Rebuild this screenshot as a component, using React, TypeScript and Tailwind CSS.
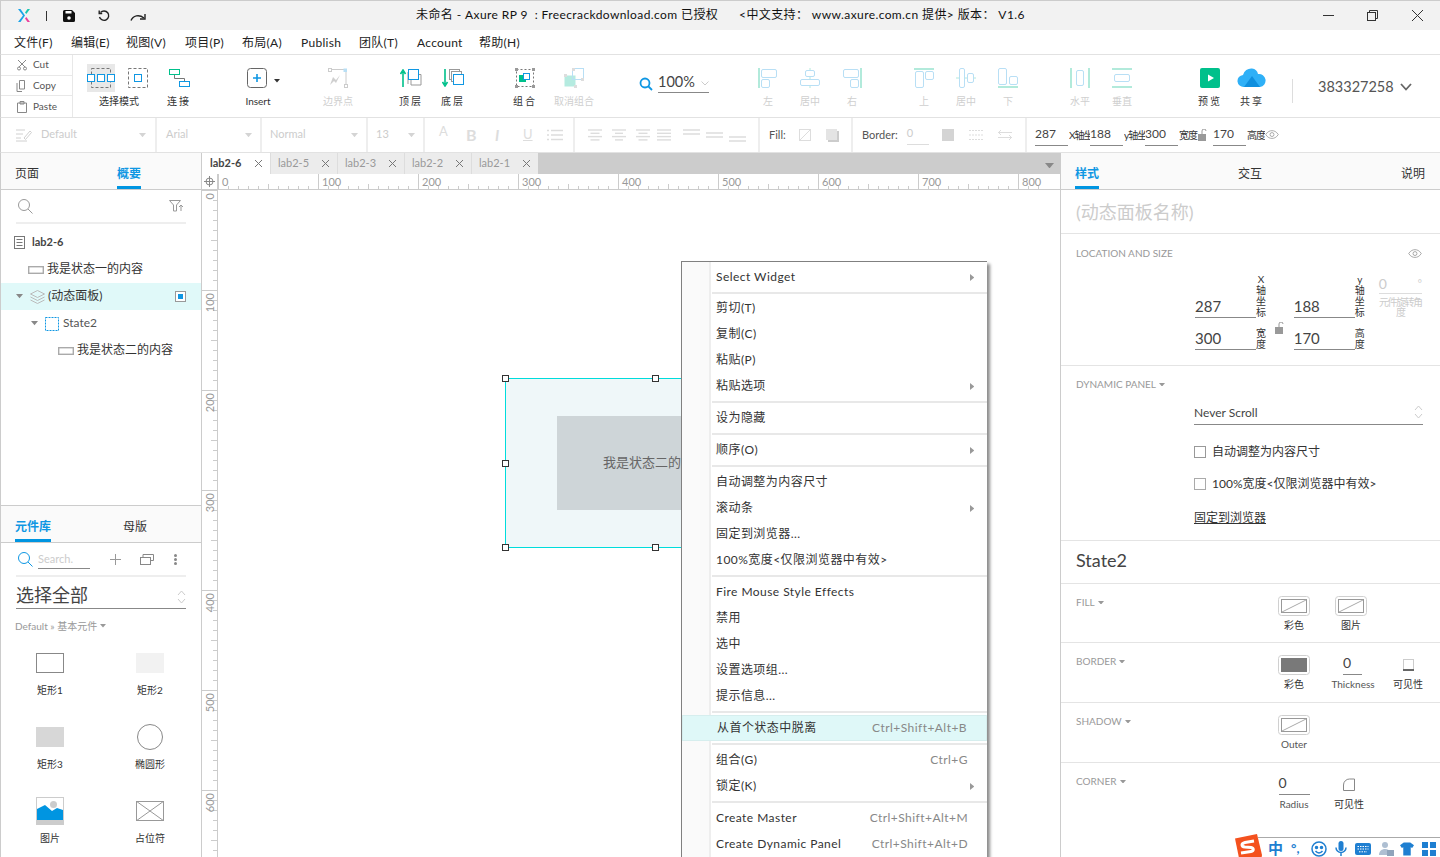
import { ReactNode } from "react";

const BLUE = "#0f97e3";
const TEAL = "#00c08b";

function Tri({ color = "#ccc", w = 7, dir = "down" }: { color?: string; w?: number; dir?: string }) {
  const points = dir === "down" ? `0,0 ${w},0 ${w / 2},${w * 0.6}` : `0,0 ${w * 0.6},${w / 2} 0,${w}`;
  return (
    <svg width={dir === "down" ? w : w * 0.6} height={dir === "down" ? w * 0.6 : w} className="shrink-0">
      <polygon points={points} fill={color} />
    </svg>
  );
}

function Tool({ label, className, muted, wide, children }: { label: string; className: string; muted?: boolean; wide?: boolean; children: ReactNode }) {
  return (
    <div className={`flex shrink-0 flex-col items-center ${className}`}>
      <div className="flex h-[28px] items-center justify-center">{children}</div>
      <div className={`mt-[2px] whitespace-nowrap text-[10px] leading-[14px] ${wide ? "tracking-[2px]" : ""} ${muted ? "text-[#cfcfcf]" : "text-[#333]"}`}>{label}</div>
    </div>
  );
}

function Dropdown({ label, className }: { label: string; className: string }) {
  return (
    <div className={`flex h-full shrink-0 items-center justify-between border-r-2 border-[#eee] ${className}`}>
      <span className="-mt-[2px] text-[11px] text-[#ccc]">{label}</span>
      <Tri color="#d4d4d4" />
    </div>
  );
}

function AlignLines({ widths }: { widths: number[] }) {
  return (
    <svg width="16" height="12" stroke="#ddd" strokeWidth="1.4" className="shrink-0">
      {widths.map((w, i) => (
        <line key={i} x1={(16 - w) / 2} x2={(16 + w) / 2} y1={1 + i * 3.3} y2={1 + i * 3.3} />
      ))}
    </svg>
  );
}

function MiniField({ value, label, labelClass, className = "" }: { value: string; label?: string; labelClass?: string; className?: string }) {
  return (
    <div className={`flex shrink-0 items-center ${className}`}>
      <div className="h-[22px] w-[33px] border-b border-[#888] text-[12px] leading-[20px] text-[#444]">{value}</div>
      {label && <div className={`overflow-hidden whitespace-nowrap text-[10px] tracking-[-1px] text-[#333] ${labelClass}`}>{label}</div>}
    </div>
  );
}

function Eye({ size = 14 }: { size?: number }) {
  return (
    <svg width={size} height={size * 0.65} viewBox="0 0 20 13" fill="none" stroke="#999" strokeWidth="1.2" className="shrink-0">
      <path d="M1 6.5C4 2 7 1 10 1s6 1 9 5.500C16 11 13 12 10 12S4 11 1 6.500Z" />
      <circle cx="10" cy="6.500" r="2.800" />
    </svg>
  );
}

function Swatch({ fill }: { fill?: string }) {
  return (
    <svg width="32" height="20" className="shrink-0">
      <rect x="0.5" y="0.5" width="31" height="19" rx="3" fill="#fff" stroke="#d0d0d0" />
      <rect x="3.500" y="3.500" width="25" height="13" fill={fill ?? "#fff"} stroke={fill ?? "#999"} />
      {!fill && <line x1="4" y1="16" x2="28" y2="4" stroke="#aaa" />}
    </svg>
  );
}

function VField({ value, label }: { value: string; label: string }) {
  return (
    <div className="flex items-end">
      <div className="h-[24px] w-[61px] border-b border-[#888] text-[15px] leading-[24px] text-[#444]">{value}</div>
      <div className="w-[10px] text-center text-[10px] leading-[11px] text-[#333] [word-break:break-all]">{label}</div>
    </div>
  );
}

function SectionTitle({ label }: { label: string }) {
  return (
    <div className="flex h-[13px] items-center gap-[3px] text-[10px] leading-[13px] text-[#999]">
      {label}
      <Tri color="#999" w={6} />
    </div>
  );
}

function Sep({ className }: { className: string }) {
  return (
    <div className={`flex items-center pl-[30px] ${className}`}>
      <div className="h-[2px] w-full bg-[#e8e8e8]" />
    </div>
  );
}

function MenuItem({ label, shortcut, arrow, active }: { label: string; shortcut?: string; arrow?: boolean; active?: boolean }) {
  return (
    <div className={`flex h-[26px] items-center pl-[34px] text-[12px] tracking-[0.45px] text-[#333] ${active ? "border border-[#d6eeee] bg-[#dff8f8] pl-[33px]" : ""}`}>
      <span className="flex-1 whitespace-nowrap">{label}</span>
      {shortcut && <span className="mr-[19px] whitespace-nowrap text-[#888]">{shortcut}</span>}
      {arrow && (
        <span className="mr-[13px]">
          <Tri dir="right" color="#999" w={7} />
        </span>
      )}
    </div>
  );
}

function WidgetCell({ label, children }: { label: string; children: ReactNode }) {
  return (
    <div className="flex h-[74px] flex-col items-center">
      <div className="flex h-[28px] items-center justify-center">{children}</div>
      <div className="mt-[6px] text-[10px] leading-[14px] text-[#333]">{label}</div>
    </div>
  );
}

function Handle({ className }: { className: string }) {
  return <div className={`absolute h-[7px] w-[7px] border border-[#333] bg-white ${className}`} />;
}

const tabs = ["lab2-5", "lab2-3", "lab2-2", "lab2-1"];
const menus = [
  ["文件(F)", "w-[57px]"],
  ["编辑(E)", "w-[55px]"],
  ["视图(V)", "w-[59px]"],
  ["项目(P)", "w-[57px]"],
  ["布局(A)", "w-[59px]"],
  ["Publish", "w-[58px]"],
  ["团队(T)", "w-[58px]"],
  ["Account", "w-[62px]"],
  ["帮助(H)", "w-[60px]"],
];

function HRuler() {
  const ticks = Array.from({ length: 84 }, (_, i) => i * 10);
  return (
    <svg width="827" height="16" className="shrink-0">
      {ticks.map((t) => (
        <line key={t} x1={t + 0.5} x2={t + 0.5} y1={t % 100 === 0 ? 0 : t % 50 === 0 ? 10 : 12} y2="16" stroke="#ccc" />
      ))}
      {[0, 100, 200, 300, 400, 500, 600, 700, 800].map((t) => (
        <text key={t} x={t + 4} y="12" fontSize="11" fill="#999">{t}</text>
      ))}
    </svg>
  );
}

function VRuler() {
  const ticks = Array.from({ length: 68 }, (_, i) => i * 10);
  return (
    <svg width="16" height="667" className="shrink-0 border-r border-[#ccc]">
      {ticks.map((t) => (
        <line key={t} x1={t % 100 === 0 ? 0 : t % 50 === 0 ? 9 : 11} x2="16" y1={t + 0.5} y2={t + 0.5} stroke="#ccc" />
      ))}
      {[0, 100, 200, 300, 400, 500, 600].map((t) => (
        <text key={t} fontSize="11" fill="#999" textAnchor="end" transform={`translate(12 ${t + 3}) rotate(-90)`}>{t}</text>
      ))}
    </svg>
  );
}

export default function App() {
  return (
    <div className="relative flex h-[857px] w-[1440px] flex-col overflow-hidden bg-white font-['Lato','Noto_Sans_CJK_SC',sans-serif] text-[#333]">
      {/* title bar */}
      <div className="flex h-[30px] shrink-0 items-center border-t border-l border-[#ccc] bg-[#f2f2f2]">
        <svg width="14" height="15" viewBox="0 0 14 15" className="ml-[16px] shrink-0">
          <path d="M1 1l5 6.500L1 14h2.500L8 7.500 3.500 1Z" fill="#1aa3e8" />
          <path d="M13 1H10.500L8 4.500 9.300 6Z" fill="#16c6b0" />
          <path d="M13 14h-2.500L8 10.500 9.300 9Z" fill="#ec3e9c" />
        </svg>
        <div className="ml-[15px] h-[10px] w-px bg-[#333]" />
        <svg width="12" height="12" viewBox="0 0 12 12" className="ml-[16px] shrink-0">
          <path d="M0 1.500A1.500 1.500 0 0 1 1.500 0H9l3 3v7.500a1.500 1.500 0 0 1-1.500 1.500h-9A1.500 1.500 0 0 1 0 10.500Z" fill="#111" />
          <rect x="2.500" y="1" width="6" height="2.500" fill="#fff" />
          <circle cx="6" cy="8" r="1.800" fill="#fff" />
        </svg>
        <svg width="12" height="12" viewBox="0 0 12 12" fill="none" stroke="#222" strokeWidth="1.400" className="ml-[23px] shrink-0">
          <path d="M2.500 2.500A4.700 4.700 0 1 1 1.500 7" />
          <path d="M1.200 0.500v3h3" />
        </svg>
        <svg width="16" height="10" viewBox="0 0 16 10" fill="none" stroke="#222" strokeWidth="1.400" className="ml-[20px] mt-[3px] shrink-0">
          <path d="M1 8.500C3 3.500 9 2 14 6" />
          <path d="M15 2v5h-5" />
        </svg>
        <div className="-mt-[2px] ml-[270px] whitespace-nowrap text-[12px] tracking-[0.4px] text-[#111]">
          未命名 - Axure RP 9 &nbsp;: Freecrackdownload.com 已授权 &nbsp; &nbsp; &nbsp;&lt;中文支持： www.axure.com.cn 提供&gt; 版本： V1.6
        </div>
        <div className="ml-auto flex items-center">
          <div className="mr-[33px] h-px w-[11px] bg-[#333]" />
          <svg width="11" height="11" fill="none" stroke="#333" className="mr-[34px] shrink-0">
            <rect x="0.500" y="2.500" width="8" height="8" />
            <path d="M2.500 2.500v-2h8v8h-2" />
          </svg>
          <svg width="11" height="11" stroke="#333" className="mr-[17px] shrink-0">
            <path d="M0 0l11 11M11 0 0 11" />
          </svg>
        </div>
      </div>

      {/* menu bar */}
      <div className="flex h-[25px] shrink-0 items-center border-b border-l border-[#ccc] border-b-[#e2e2e2] pl-[13px] pt-[1px] text-[12px] tracking-[0.3px] text-[#222]">
        {menus.map(([m, w]) => (
          <div key={m} className={`whitespace-nowrap ${w}`}>{m}</div>
        ))}
      </div>

      {/* toolbar */}
      <div className="flex h-[63px] shrink-0 border-b border-l border-[#e2e2e2] border-l-[#ccc]">
        <div className="flex w-[72px] shrink-0 flex-col border-r border-[#e8e8e8] text-[10px] text-[#555]">
          {[
            ["Cut", "M3 8 10 1M9 8 2 1M4.500 9.500a1.500 1.500 0 1 1-3 0 1.500 1.500 0 0 1 3 0ZM10.500 9.500a1.500 1.500 0 1 1-3 0 1.500 1.500 0 0 1 3 0Z"],
            ["Copy", "M3.500 .5h5v8.500h-5ZM1 3v8.500h5"],
            ["Paste", "M1.500 2h9v9.500h-9ZM4 .5h4V3H4Z"],
          ].map(([t, d], i) => (
            <div key={t} className={`flex h-[21px] items-center pl-[15px] ${i < 2 ? "border-b border-[#e8e8e8]" : ""}`}>
              <svg width="12" height="12" fill="none" stroke="#888" className="shrink-0">
                <path d={d} />
              </svg>
              <span className="ml-[5px]">{t}</span>
            </div>
          ))}
        </div>
        <div className="flex pt-[9px]">
          <Tool label="选择模式" className="ml-[16px] w-[60px]">
            <div className="mr-[20px] flex items-center">
              <svg width="28" height="28" className="shrink-0 bg-[#e8e8e8]">
                <rect x="4.500" y="4.500" width="19" height="19" fill="none" stroke="#777" strokeDasharray="3 2" />
                <g fill="#fff" stroke={BLUE}>
                  <rect x="0.500" y="10.500" width="7" height="7" />
                  <rect x="10.500" y="10.500" width="7" height="7" />
                  <rect x="20.500" y="10.500" width="7" height="7" />
                </g>
              </svg>
              <svg width="20" height="20" className="ml-[13px] -mr-[16px] shrink-0">
                <rect x="0.500" y="0.500" width="19" height="19" fill="none" stroke="#777" strokeDasharray="3 2" />
                <rect x="6.500" y="6.500" width="7" height="7" fill="#fff" stroke={BLUE} />
              </svg>
            </div>
          </Tool>
          <Tool label="连接" wide className="ml-[10px] w-[40px]">
            <svg width="21" height="19" fill="none" className="shrink-0">
              <rect x="0.500" y="0.500" width="10" height="5" stroke={TEAL} />
              <rect x="10.500" y="12.500" width="10" height="5" stroke={BLUE} />
              <path d="M5.500 6v3.500h10V12" stroke="#777" />
            </svg>
          </Tool>
          <Tool label="Insert" className="ml-[39px] w-[40px]">
            <div className="flex items-center">
              <svg width="20" height="20" fill="none" className="ml-[10px] shrink-0">
                <rect x="0.500" y="0.500" width="19" height="19" rx="3" stroke="#666" />
                <path d="M10 6v8M6 10h8" stroke={BLUE} strokeWidth="1.600" />
              </svg>
              <span className="ml-[7px] mt-[6px]"><Tri color="#333" w={6} /></span>
            </div>
          </Tool>
          <Tool label="边界点" muted className="ml-[40px] w-[40px]">
            <svg width="20" height="20" fill="none" className="shrink-0">
              <path d="M3 1.500h14M18 4v12" stroke="#ccc" />
              <rect x="0.500" y="0.500" width="3" height="3" stroke="#ccc" />
              <rect x="15.500" y="0.500" width="3.500" height="3.500" fill="#b8dff5" />
              <rect x="16.500" y="16.500" width="3" height="3" stroke="#ccc" />
              <path d="M2 17l3-8 3 3 4-5-4 8-2-2Z" fill="#cfcfcf" />
            </svg>
          </Tool>
          <Tool label="顶层" wide className="ml-[32px] w-[42px]">
            <svg width="22" height="18" fill="none" className="shrink-0">
              <path d="M3 18V3M0.500 5 3 1l2.500 4" stroke={TEAL} strokeWidth="1.600" />
              <path d="M11 5.500h10V16H11ZM8 3v12" stroke="#999" />
              <rect x="8.500" y="0.500" width="10" height="10" fill="#fff" stroke={BLUE} />
            </svg>
          </Tool>
          <Tool label="底层" wide className="w-[42px]">
            <svg width="22" height="18" fill="none" className="shrink-0">
              <path d="M3 0v15M0.500 13 3 17l2.500-4" stroke={TEAL} strokeWidth="1.600" />
              <rect x="7.500" y="0.500" width="10" height="10" stroke="#999" />
              <rect x="9.500" y="2.500" width="10" height="10" fill="#fff" stroke="#999" />
              <rect x="11.500" y="5.500" width="10" height="10" fill="#fff" stroke={BLUE} />
            </svg>
          </Tool>
          <Tool label="组合" wide className="ml-[30px] w-[42px]">
            <svg width="20" height="20" fill="none" className="shrink-0">
              <rect x="1.500" y="1.500" width="17" height="17" stroke="#777" strokeDasharray="2 2" />
              <rect x="4" y="7" width="7" height="7" fill={TEAL} />
              <rect x="8.500" y="5.500" width="6" height="6" fill="#fff" stroke={BLUE} />
              <g fill="#999">
                <rect width="3" height="3" /><rect x="17" width="3" height="3" /><rect y="17" width="3" height="3" /><rect x="17" y="17" width="3" height="3" />
              </g>
            </svg>
          </Tool>
          <Tool label="取消组合" muted className="ml-[2px] w-[52px]">
            <svg width="20" height="20" fill="none" className="shrink-0">
              <rect x="0.500" y="7.500" width="11" height="11" fill="#b5ebe0" />
              <rect x="8.500" y="0.500" width="11" height="11" stroke="#b8dff5" />
              <g fill="#ddd">
                <rect x="0" y="6" width="3" height="3" /><rect x="10" y="17" width="3" height="3" /><rect x="17" y="10" width="3" height="3" /><rect x="8" y="0" width="3" height="3" />
              </g>
            </svg>
          </Tool>
          <div className="ml-[38px] mt-[4px] flex h-[28px] w-[72px] shrink-0 items-center">
            <svg width="14" height="14" fill="none" stroke={BLUE} strokeWidth="1.800" className="ml-[1px] mt-[3px] shrink-0">
              <circle cx="6" cy="6" r="4.500" /><path d="M9 9l4 4" />
            </svg>
            <div className="ml-[5px] flex h-[22px] w-[51px] items-center justify-between border-b border-[#888] text-[14.5px] text-[#444]">
              100%
              <svg width="8" height="5" fill="none" stroke="#ccc" className="mt-[4px] shrink-0"><path d="M0.500 0.500l3.500 3.500 3.500-3.500" /></svg>
            </div>
          </div>
          <Tool label="左" muted className="ml-[37px] w-[42px]">
            <svg width="20" height="20" fill="none" className="shrink-0"><path d="M1 0v20" stroke="#b2eadb" strokeWidth="2" /><g stroke="#b8dff5"><rect x="3.500" y="1.500" width="15" height="8" rx="1.500" /><rect x="3.500" y="11.500" width="8" height="8" rx="1.500" /></g></svg>
          </Tool>
          <Tool label="居中" muted className="w-[42px]">
            <svg width="20" height="20" fill="none" className="shrink-0"><path d="M10 0v20" stroke="#b2eadb" /><g stroke="#b8dff5" fill="#fff"><rect x="5.500" y="2.500" width="9" height="6" rx="1.500" /><rect x="0.500" y="11.500" width="19" height="6" rx="1.500" /></g></svg>
          </Tool>
          <Tool label="右" muted className="w-[42px]">
            <svg width="20" height="20" fill="none" className="shrink-0"><path d="M19 0v20" stroke="#b2eadb" strokeWidth="2" /><g stroke="#b8dff5"><rect x="1.500" y="1.500" width="15" height="8" rx="1.500" /><rect x="8.500" y="11.500" width="8" height="8" rx="1.500" /></g></svg>
          </Tool>
          <Tool label="上" muted className="ml-[30px] w-[42px]">
            <svg width="20" height="20" fill="none" className="shrink-0"><path d="M0 1h20" stroke="#b2eadb" strokeWidth="2" /><g stroke="#b8dff5"><rect x="1.500" y="3.500" width="8" height="16" rx="1.500" /><rect x="11.500" y="3.500" width="8" height="8" rx="1.500" /></g></svg>
          </Tool>
          <Tool label="居中" muted className="w-[42px]">
            <svg width="20" height="20" fill="none" className="shrink-0"><path d="M0 10h20" stroke="#b2eadb" /><g stroke="#b8dff5" fill="#fff"><rect x="3.500" y="0.500" width="5" height="19" rx="1.500" /><rect x="11.500" y="5.500" width="6" height="9" rx="1.500" /></g></svg>
          </Tool>
          <Tool label="下" muted className="w-[42px]">
            <svg width="20" height="20" fill="none" className="shrink-0"><path d="M0 19h20" stroke="#b2eadb" strokeWidth="2" /><g stroke="#b8dff5"><rect x="0.500" y="0.500" width="8" height="16" rx="1.500" /><rect x="11.500" y="8.500" width="8" height="8" rx="1.500" /></g></svg>
          </Tool>
          <Tool label="水平" muted className="ml-[30px] w-[42px]">
            <svg width="20" height="20" fill="none" className="shrink-0"><path d="M1 0v20M19 0v20" stroke="#b2eadb" strokeWidth="2" /><rect x="6.500" y="2.500" width="7" height="15" rx="1.500" stroke="#b8dff5" /></svg>
          </Tool>
          <Tool label="垂直" muted className="w-[42px]">
            <svg width="20" height="20" fill="none" className="shrink-0"><path d="M0 1h20M0 19h20" stroke="#b2eadb" strokeWidth="2" /><rect x="2.500" y="6.500" width="15" height="7" rx="1.500" stroke="#b8dff5" /></svg>
          </Tool>
          <Tool label="预览" wide className="ml-[46px] w-[42px]">
            <svg width="20" height="20" className="shrink-0"><rect width="20" height="20" rx="2" fill="#00c08b" /><path d="M8 6.500l6 3.500-6 3.500Z" fill="#fff" /></svg>
          </Tool>
          <Tool label="共享" wide className="w-[42px]">
            <svg width="30" height="20" viewBox="0 0 30 20" className="shrink-0">
              <path d="M7 19a6 6 0 0 1-1-12 8.500 8.500 0 0 1 9-6.500A7 7 0 0 1 21 6a6.500 6.500 0 0 1 2 13Z" fill="#2fb0f7" />
              <path d="M7 19 15 8l8 11Z" fill="#0f8fde" />
            </svg>
          </Tool>
          <div className="ml-[19px] mt-[15px] h-[24px] w-px bg-[#ddd]" />
          <div className="ml-[25px] flex h-[45px] items-center gap-[6px] text-[14.5px] text-[#555]">
            383327258
            <svg width="12" height="8" fill="none" stroke="#666" strokeWidth="1.800" className="shrink-0"><path d="M1 1l5 5.500L11 1" /></svg>
          </div>
        </div>
      </div>

      {/* format bar */}
      <div className="flex h-[35px] shrink-0 items-center border-b border-l border-[#e2e2e2] border-l-[#ccc]">
        <div className="flex h-full w-[156px] shrink-0 items-center justify-between border-r-2 border-[#eee] pl-[15px] pr-[9px]">
          <svg width="16" height="14" fill="none" stroke="#d0d0d0" className="shrink-0"><path d="M0 2h9M0 6h7M0 10h5M0 13h11M8 10l6-7 1.500 1.500-6 7Z" /></svg>
          <span className="-mt-[2px] ml-[9px] flex-1 text-[11px] text-[#ccc]">Default</span>
          <Tri color="#d4d4d4" />
        </div>
        <Dropdown label="Arial" className="w-[105px] pl-[9px] pr-[8px]" />
        <Dropdown label="Normal" className="w-[106px] pl-[8px] pr-[8px]" />
        <Dropdown label="13" className="w-[57px] pl-[8px] pr-[8px]" />
        <div className="flex h-full w-[150px] shrink-0 items-center border-r-2 border-[#eee] text-[#ddd]">
          <span className="ml-[14px] mb-[6px] w-[20px] text-[13px]">A</span>
          <span className="ml-[7px] w-[29px] text-[16px] font-bold">B</span>
          <span className="w-[28px] text-[15px] font-bold italic">I</span>
          <span className="w-[24px] text-[13px] underline">U</span>
          <svg width="16" height="12" stroke="#ddd" strokeWidth="1.500" className="shrink-0"><path d="M4 1.500h12M4 6h12M4 10.500h12M0 1.500h2M0 6h2M0 10.500h2" /></svg>
        </div>
        <div className="flex h-full w-[185px] shrink-0 items-center border-r-2 border-[#eee] pl-[12px]">
          <div className="flex gap-[8px]">
            <AlignLines widths={[14, 9, 14, 9]} />
            <AlignLines widths={[14, 8, 14, 8]} />
            <AlignLines widths={[14, 9, 14, 9]} />
          </div>
          <div className="ml-[5px]"><AlignLines widths={[14, 14, 14, 14]} /></div>
          <div className="ml-[11px] flex items-center gap-[6px]">
            <svg width="17" height="6" stroke="#ddd" strokeWidth="1.500" className="mb-[7px] shrink-0"><path d="M0 1h17M0 5h17" /></svg>
            <svg width="17" height="6" stroke="#ddd" strokeWidth="1.500" className="shrink-0"><path d="M0 1h17M0 5h17" /></svg>
            <svg width="17" height="6" stroke="#ddd" strokeWidth="1.500" className="mt-[7px] shrink-0"><path d="M0 1h17M0 5h17" /></svg>
          </div>
        </div>
        <div className="flex h-full w-[93px] shrink-0 items-center border-r-2 border-[#eee] pl-[9px] text-[11px] text-[#555]">
          Fill:
          <svg width="12" height="12" fill="none" stroke="#ddd" className="ml-[13px] shrink-0"><rect x="0.500" y="0.500" width="11" height="11" /><path d="M1 11 11 1" /></svg>
          <svg width="13" height="13" className="ml-[15px] shrink-0"><rect x="2" y="2" width="11" height="11" fill="#ccc" /><rect width="11" height="11" fill="#e4e4e4" /></svg>
        </div>
        <div className="flex h-full w-[174px] shrink-0 items-center border-r-2 border-[#eee] pl-[9px] text-[11px] text-[#555]">
          Border:
          <div className="ml-[9px] h-[20px] w-[22px] border-b border-[#ddd] text-[11px] leading-[16px] text-[#ccc]">0</div>
          <div className="ml-[13px] h-[12px] w-[12px] shrink-0 bg-[#d4d4d4]" />
          <svg width="15" height="12" stroke="#ddd" className="ml-[15px] shrink-0" strokeDasharray="2 1"><path d="M0 1.500h15M0 6h15M0 10.500h15" /></svg>
          <svg width="14" height="12" fill="none" stroke="#ddd" className="ml-[14px] shrink-0"><path d="M0 3.500h14M0 8.500h14M3 1 .5 3.500 3 6M11 6l2.500 2.500L11 11" /></svg>
        </div>
        <div className="flex h-full items-center pl-[8px]">
          <MiniField value="287" label="X轴坐标" labelClass="ml-[1px] w-[21px]" />
          <MiniField value="188" label="y轴坐标" labelClass="ml-[1px] w-[21px]" />
          <MiniField value="300" label="宽度" labelClass="ml-[1px] w-[20px]" />
          <svg width="10" height="12" className="-ml-[1px] shrink-0"><rect y="5" width="8" height="7" fill="#999" /><path d="M4 5V2a2 2 0 0 1 4 0" fill="none" stroke="#999" /></svg>
          <div className="ml-[5px]"><MiniField value="170" label="高度" labelClass="ml-[1px] w-[18px]" /></div>
          <Eye />
        </div>
      </div>

      {/* main */}
      <div className="flex min-h-0 flex-1">
        {/* left panel */}
        <div className="flex w-[202px] shrink-0 flex-col border-x border-[#ccc]">
          <div className="flex h-[37px] shrink-0 border-b border-[#ccc] bg-[#fafafa] pl-[14px] text-[12px]">
            <div className="w-[102px] pt-[12px]">页面</div>
            <div className="flex h-[36px] w-[24px] flex-col">
              <div className="flex-1 whitespace-nowrap pt-[12px] font-bold text-[#0f97e3]">概要</div>
              <div className="h-[3px] bg-[#0095e1]" />
            </div>
          </div>
          <div className="mx-[15px] flex h-[34px] shrink-0 items-center justify-between border-b-2 border-[#eee] pl-[2px] pr-[2px]">
            <svg width="15" height="15" fill="none" stroke="#999" className="shrink-0"><circle cx="6" cy="6" r="5.500" /><path d="M10 10l4.500 4.500" /></svg>
            <svg width="15" height="12" fill="none" stroke="#999" className="shrink-0"><path d="M0.500 0.500h11L7.500 5v6h-3V5ZM12 11V5M10 7l2-2 2 2" /></svg>
          </div>
          <div className="mt-[5px] flex flex-col text-[12px] text-[#333]">
            <div className="flex h-[27px] items-center pl-[13px]">
              <svg width="11" height="13" fill="none" stroke="#777" className="shrink-0"><rect x="0.500" y="0.500" width="10" height="12" /><path d="M2.500 3.500h6M2.500 6.500h6M2.500 9.500h6" /></svg>
              <span className="ml-[7px] text-[11px] font-bold text-[#444]">lab2-6</span>
            </div>
            <div className="flex h-[27px] items-center pl-[27px]">
              <svg width="16" height="8" fill="none" stroke="#aaa" strokeWidth="1.400" className="shrink-0"><rect x="0.700" y="0.700" width="14.600" height="6.600" /></svg>
              <span className="-mt-[2px] ml-[3px]">我是状态一的内容</span>
            </div>
            <div className="flex h-[27px] items-center bg-[#e0f9f9] pl-[15px] pr-[15px]">
              <Tri color="#888" w={7} />
              <svg width="15" height="14" fill="none" stroke="#bbb" className="ml-[7px] shrink-0"><path d="M7.500 0.500 14.500 4l-7 3.500L.5 4ZM.5 7l7 3.500 7-3.500M.5 10l7 3.500 7-3.500" /></svg>
              <span className="-mt-[2px] ml-[3px] flex-1">(动态面板)</span>
              <svg width="11" height="11" className="shrink-0"><rect x="0.500" y="0.500" width="10" height="10" fill="#fff" stroke="#999" /><rect x="3" y="3" width="5" height="5" fill={BLUE} /></svg>
            </div>
            <div className="flex h-[27px] items-center pl-[30px]">
              <Tri color="#888" w={7} />
              <svg width="14" height="14" fill="none" stroke={BLUE} strokeDasharray="2 1" className="ml-[7px] shrink-0"><rect x="0.500" y="0.500" width="13" height="13" /></svg>
              <span className="-mt-[2px] ml-[4px] text-[#555]">State2</span>
            </div>
            <div className="flex h-[27px] items-center pl-[57px]">
              <svg width="16" height="8" fill="none" stroke="#aaa" strokeWidth="1.400" className="shrink-0"><rect x="0.700" y="0.700" width="14.600" height="6.600" /></svg>
              <span className="-mt-[2px] ml-[3px]">我是状态二的内容</span>
            </div>
          </div>

          <div className="mt-auto flex h-[352px] shrink-0 flex-col border-t border-[#ccc]">
            <div className="flex h-[37px] shrink-0 border-b border-[#ccc] bg-[#fafafa] pl-[14px] text-[12px]">
              <div className="flex h-[36px] w-[36px] flex-col">
                <div className="flex-1 whitespace-nowrap pt-[12px] font-bold text-[#0f97e3]">元件库</div>
                <div className="h-[3px] bg-[#0095e1]" />
              </div>
              <div className="ml-[72px] pt-[12px]">母版</div>
            </div>
            <div className="mx-[15px] flex h-[34px] shrink-0 items-center border-b-2 border-[#eee] pl-[2px]">
              <svg width="15" height="15" fill="none" stroke={BLUE} className="shrink-0"><circle cx="6" cy="6" r="5.500" /><path d="M10 10l4.500 4.500" /></svg>
              <div className="ml-[5px] h-[20px] w-[52px] border-b border-[#888] text-[11px] leading-[20px] text-[#ccc]">Search.</div>
              <svg width="11" height="11" stroke="#999" className="ml-[20px] shrink-0"><path d="M5.500 0v11M0 5.500h11" /></svg>
              <svg width="14" height="11" fill="none" stroke="#888" className="ml-[19px] shrink-0"><rect x="0.500" y="3.500" width="10" height="7" /><path d="M3 3V.5h10.500v6H11" /></svg>
              <svg width="3" height="11" fill="#888" className="ml-[20px] shrink-0"><circle cx="1.500" cy="1.500" r="1.500" /><circle cx="1.500" cy="5.500" r="1.500" /><circle cx="1.500" cy="9.500" r="1.500" /></svg>
            </div>
            <div className="mx-[15px] flex h-[32px] shrink-0 items-end justify-between border-b border-[#888]">
              <span className="text-[18px] leading-[26px] text-[#444]">选择全部</span>
              <svg width="9" height="16" fill="none" stroke="#ccc" className="mb-[3px] shrink-0"><path d="M1 6l3.500-4L8 6M1 10l3.500 4L8 10" /></svg>
            </div>
            <div className="ml-[14px] mt-[10px] flex h-[14px] items-center gap-[3px] text-[10px] text-[#999]">
              Default » 基本元件 <Tri color="#999" w={6} />
            </div>
            <div className="mt-[16px] grid grid-cols-[98px_102px]">
              <WidgetCell label="矩形1"><div className="h-[20px] w-[28px] border border-[#888]" /></WidgetCell>
              <WidgetCell label="矩形2"><div className="h-[20px] w-[28px] bg-[#f2f2f2]" /></WidgetCell>
              <WidgetCell label="矩形3"><div className="h-[20px] w-[28px] bg-[#d7d7d7]" /></WidgetCell>
              <WidgetCell label="椭圆形"><div className="h-[26px] w-[26px] rounded-full border border-[#888]" /></WidgetCell>
              <WidgetCell label="图片">
                <svg width="28" height="28" className="shrink-0">
                  <rect x="0.500" y="0.500" width="27" height="27" fill="#fff" stroke="#ccc" />
                  <rect y="23" width="28" height="5" fill="#ccc" />
                  <circle cx="17.500" cy="7.500" r="3.500" fill="#ccc" />
                  <path d="M1 12l8-4 7 6 5-3 6 2v10H1Z" fill="#0095e1" />
                </svg>
              </WidgetCell>
              <WidgetCell label="占位符">
                <svg width="28" height="20" fill="none" stroke="#999" className="shrink-0"><rect x="0.500" y="0.500" width="27" height="19" /><path d="M0 0l28 20M28 0 0 20" /></svg>
              </WidgetCell>
            </div>
          </div>
        </div>

        {/* center */}
        <div className="flex min-w-0 flex-1 flex-col">
          <div className="flex h-[21px] shrink-0 bg-[#ccc] text-[11px]">
            <div className="flex w-[68px] items-center justify-between bg-white pl-[8px] pr-[8px] font-bold text-[#444]">
              lab2-6
              <svg width="7" height="7" stroke="#777" className="shrink-0"><path d="M0 0l7 7M7 0 0 7" /></svg>
            </div>
            {tabs.map((t) => (
              <div key={t} className="flex w-[67px] items-center justify-between border-l border-[#ddd] bg-[#ececec] pl-[7px] pr-[8px] text-[#999]">
                {t}
                <svg width="7" height="7" stroke="#777" className="shrink-0"><path d="M0 0l7 7M7 0 0 7" /></svg>
              </div>
            ))}
            <div className="ml-auto mr-[6px] mt-[10px]"><Tri color="#888" w={9} /></div>
          </div>
          <div className="flex h-[16px] shrink-0 border-b border-[#ccc]">
            <div className="flex w-[16px] shrink-0 items-center justify-center border-r border-[#ccc]">
              <svg width="11" height="11" fill="none" stroke="#888" className="shrink-0"><circle cx="5.500" cy="5.500" r="3.500" /><path d="M5.500 0v11M0 5.500h11" /></svg>
            </div>
            <HRuler />
          </div>
          <div className="flex min-h-0 flex-1">
            <VRuler />
            <div className="relative min-w-0 flex-1 overflow-hidden">
              <div className="absolute left-[287px] top-[188px] h-[170px] w-[300px] border border-[#00dcdc] bg-[#eff7f9]">
                <div className="absolute left-[51px] top-[37px] flex h-[94px] w-[196px] items-center justify-center bg-[#ced5d8] text-[13px] text-[#666]">我是状态二的内容</div>
              </div>
              <Handle className="left-[284px] top-[185px]" />
              <Handle className="left-[434px] top-[185px]" />
              <Handle className="left-[284px] top-[270px]" />
              <Handle className="left-[284px] top-[354px]" />
              <Handle className="left-[434px] top-[354px]" />

              {/* context menu */}
              <div className="absolute left-[463px] top-[71px] w-[306px] border-t border-l border-[#808080] bg-white pt-[2px] shadow-[3px_3px_3px_rgba(0,0,0,0.45)]">
                <div className="absolute bottom-0 left-0 top-0 w-[29px] border-r-2 border-[#eee] bg-[#fafafa]" />
                <div className="relative">
                  <MenuItem label="Select Widget" arrow />
                  <Sep className="h-[5px]" />
                  <MenuItem label="剪切(T)" />
                  <MenuItem label="复制(C)" />
                  <MenuItem label="粘贴(P)" />
                  <MenuItem label="粘贴选项" arrow />
                  <Sep className="h-[6px]" />
                  <MenuItem label="设为隐藏" />
                  <Sep className="h-[6px]" />
                  <MenuItem label="顺序(O)" arrow />
                  <Sep className="h-[6px]" />
                  <MenuItem label="自动调整为内容尺寸" />
                  <MenuItem label="滚动条" arrow />
                  <MenuItem label="固定到浏览器..." />
                  <MenuItem label="100%宽度<仅限浏览器中有效>" />
                  <Sep className="h-[6px]" />
                  <MenuItem label="Fire Mouse Style Effects" />
                  <MenuItem label="禁用" />
                  <MenuItem label="选中" />
                  <MenuItem label="设置选项组..." />
                  <MenuItem label="提示信息..." />
                  <Sep className="h-[6px]" />
                  <MenuItem label="从首个状态中脱离" shortcut="Ctrl+Shift+Alt+B" active />
                  <Sep className="h-[6px]" />
                  <MenuItem label="组合(G)" shortcut="Ctrl+G" />
                  <MenuItem label="锁定(K)" arrow />
                  <Sep className="h-[6px]" />
                  <MenuItem label="Create Master" shortcut="Ctrl+Shift+Alt+M" />
                  <MenuItem label="Create Dynamic Panel" shortcut="Ctrl+Shift+Alt+D" />
                </div>
              </div>
            </div>
          </div>
        </div>

        {/* right panel */}
        <div className="flex w-[380px] shrink-0 flex-col border-l border-[#ccc]">
          <div className="flex h-[37px] shrink-0 justify-between border-b border-[#ccc] bg-[#fafafa] pl-[14px] pr-[15px] text-[12px]">
            <div className="flex h-[36px] w-[24px] flex-col">
              <div className="flex-1 whitespace-nowrap pt-[12px] font-bold text-[#0f97e3]">样式</div>
              <div className="h-[3px] bg-[#0095e1]" />
            </div>
            <div className="pt-[12px]">交互</div>
            <div className="pt-[12px]">说明</div>
          </div>
          <div className="flex h-[44px] shrink-0 items-center border-b border-[#e4e4e4] pl-[15px] pt-[1px] text-[18px] text-[#ccc]">(动态面板名称)</div>
          <div className="h-[132px] shrink-0 border-b border-[#e4e4e4] pl-[15px] pr-[18px] pt-[13px]">
            <div className="flex h-[13px] items-center justify-between text-[10px] text-[#999]">
              LOCATION AND SIZE
              <Eye />
            </div>
            <div className="ml-[119px] mt-[14px] flex">
              <div className="flex flex-col">
                <VField value="287" label="X轴坐标" />
                <div className="mt-[8px]"><VField value="300" label="宽度" /></div>
              </div>
              <div className="w-[28px] pl-[9px] pt-[48px]">
                <svg width="11" height="12" className="shrink-0"><rect y="5" width="8" height="7" fill="#999" /><path d="M4 5V2a2 2 0 0 1 4 0" fill="none" stroke="#999" /></svg>
              </div>
              <div className="flex flex-col">
                <VField value="188" label="y轴坐标" />
                <div className="mt-[8px]"><VField value="170" label="高度" /></div>
              </div>
              <div className="ml-[14px] w-[44px] text-center">
                <div className="flex h-[20px] items-center justify-between border-b border-[#ddd] text-[14px] text-[#ccc]">
                  0<span className="text-[10px]">°</span>
                </div>
                <div className="mt-[3px] text-[10px] leading-[10px] tracking-[-1.5px] text-[#ccc]">元件旋转角度</div>
              </div>
            </div>
          </div>
          <div className="h-[175px] shrink-0 border-b border-[#e4e4e4] pl-[15px] pr-[17px] pt-[12px]">
            <SectionTitle label="DYNAMIC PANEL" />
            <div className="ml-[118px] mt-[9px] flex h-[25px] items-center justify-between border-b border-[#888] pt-[2px] text-[12px] text-[#444]">
              Never Scroll
              <svg width="9" height="16" fill="none" stroke="#ccc" className="-mt-[2px] shrink-0"><path d="M1 6l3.500-4L8 6M1 10l3.500 4L8 10" /></svg>
            </div>
            <div className="ml-[118px] mt-[20px] flex h-[14px] items-center text-[12px]">
              <div className="h-[12px] w-[12px] shrink-0 border border-[#999]" />
              <span className="ml-[6px]">自动调整为内容尺寸</span>
            </div>
            <div className="ml-[118px] mt-[18px] flex h-[14px] items-center text-[12px]">
              <div className="h-[12px] w-[12px] shrink-0 border border-[#aaa]" />
              <span className="ml-[6px]">100%宽度&lt;仅限浏览器中有效&gt;</span>
            </div>
            <div className="ml-[118px] mt-[20px] text-[12px] leading-[14px] underline">固定到浏览器</div>
          </div>
          <div className="flex h-[43px] shrink-0 items-center border-b border-[#e4e4e4] pb-[3px] pl-[15px] text-[18px] text-[#444]">State2</div>
          <div className="flex h-[59px] shrink-0 border-b border-[#e4e4e4] pt-[12px]">
            <div className="w-[217px] shrink-0 pl-[15px]"><SectionTitle label="FILL" /></div>
            <div className="flex w-[32px] flex-col items-center">
              <Swatch />
              <div className="mt-[2px] whitespace-nowrap text-[10px] leading-[14px]">彩色</div>
            </div>
            <div className="ml-[25px] flex w-[32px] flex-col items-center">
              <Swatch />
              <div className="mt-[2px] whitespace-nowrap text-[10px] leading-[14px]">图片</div>
            </div>
          </div>
          <div className="flex h-[60px] shrink-0 border-b border-[#e4e4e4] pt-[12px]">
            <div className="w-[217px] shrink-0 pl-[15px]"><SectionTitle label="BORDER" /></div>
            <div className="flex w-[32px] flex-col items-center">
              <Swatch fill="#797979" />
              <div className="mt-[2px] whitespace-nowrap text-[10px] leading-[14px]">彩色</div>
            </div>
            <div className="ml-[18px] flex w-[50px] flex-col items-start">
              <div className="ml-[15px] h-[20px] w-[19px] border-b border-[#888] text-left text-[14px] leading-[15px] text-[#444]">0</div>
              <div className="mt-[2px] w-full text-center text-[10px] leading-[14px] text-[#555]">Thickness</div>
            </div>
            <div className="ml-[15px] flex w-[30px] flex-col items-center">
              <svg width="11" height="20" className="shrink-0"><rect x="0.500" y="4.500" width="10" height="10" fill="none" stroke="#999" strokeDasharray="1 1" /><rect y="14" width="11" height="2" fill="#666" /></svg>
              <div className="mt-[2px] whitespace-nowrap text-[10px] leading-[14px]">可见性</div>
            </div>
          </div>
          <div className="flex h-[60px] shrink-0 border-b border-[#e4e4e4] pt-[12px]">
            <div className="w-[217px] shrink-0 pl-[15px]"><SectionTitle label="SHADOW" /></div>
            <div className="flex w-[32px] flex-col items-center">
              <Swatch />
              <div className="mt-[2px] text-[10px] leading-[14px] text-[#555]">Outer</div>
            </div>
          </div>
          <div className="flex flex-1 pt-[12px]">
            <div className="w-[217px] shrink-0 pl-[15px]"><SectionTitle label="CORNER" /></div>
            <div className="flex w-[32px] flex-col items-center">
              <div className="h-[20px] w-[31px] border-b border-[#888] text-[14px] leading-[15px] text-[#444]">0</div>
              <div className="mt-[2px] text-[10px] leading-[14px] text-[#555]">Radius</div>
            </div>
            <div className="ml-[21px] flex w-[36px] flex-col items-center">
              <svg width="12" height="20" fill="none" stroke="#888" className="shrink-0"><path d="M.5 15.500V10a6 6 0 0 1 6-6h5v11.500Z" /></svg>
              <div className="mt-[2px] whitespace-nowrap text-[10px] leading-[14px]">可见性</div>
            </div>
          </div>
        </div>
      </div>

      {/* IME status bar, floats over the window */}
      <div className="absolute bottom-0 right-0 flex h-[20px] w-[206px] items-start">
        <svg width="28" height="24" viewBox="0 0 28 24" className="relative z-10 -mr-[4px] -mt-[3px] shrink-0">
          <path d="M1 4.500 23 0l5 21-.5 3H5Z" fill="#f4511e" />
          <path d="M20 7 11 8.500c-4 1-4 4 0 4.500l6 .5c3 .5 3 3.500 0 4l-10 1.500" fill="none" stroke="#fff" strokeWidth="3" />
        </svg>
        <div className="flex h-[20px] flex-1 items-center border-t border-[#aaa] bg-white pl-[10px] pt-[2px] text-[15px] font-bold leading-none text-[#1f7fd1]">
          <span className="w-[15px]">中</span>
          <span className="ml-[8px] w-[11px] text-[13px]">°,</span>
          <svg width="16" height="16" fill="none" stroke="#1f7fd1" strokeWidth="1.500" className="ml-[9px] shrink-0"><circle cx="8" cy="8" r="7" /><circle cx="5.500" cy="6.500" r="1" fill="#1f7fd1" /><circle cx="10.500" cy="6.500" r="1" fill="#1f7fd1" /><path d="M4.500 10c2 2.500 5 2.500 7 0" /></svg>
          <svg width="12" height="16" fill="none" className="ml-[8px] shrink-0"><rect x="3.500" y="0" width="5" height="10" rx="2.500" fill="#1f7fd1" /><path d="M1 6.500a5 5 0 0 0 10 0M6 12v3" stroke="#1f7fd1" strokeWidth="1.500" /></svg>
          <svg width="16" height="12" className="ml-[8px] shrink-0"><rect width="16" height="12" rx="2" fill="#1f7fd1" /><path d="M2.500 3.500h11M2.500 6h11M4 8.800h8" stroke="#fff" strokeDasharray="1.500 1" /></svg>
          <svg width="15" height="16" className="ml-[8px] shrink-0"><circle cx="6" cy="4" r="3" fill="#aebfd2" /><path d="M0 14c0-4 3-6 6-6s4 1 4 2v4Z" fill="#aebfd2" /><rect x="8" y="9" width="7" height="6" fill="#8fa4bb" /></svg>
          <svg width="14" height="14" viewBox="0 0 15 14" className="ml-[6px] shrink-0"><path d="M4 0h7l4 3-2 3-1.500-1v9h-8V5L2 6 0 3Z" fill="#1f7fd1" /></svg>
          <svg width="14" height="14" fill="#1f7fd1" className="ml-[8px] shrink-0"><rect width="6" height="6" /><rect x="8" width="6" height="6" /><rect y="8" width="6" height="6" /><rect x="8" y="8" width="6" height="6" /></svg>
        </div>
      </div>
    </div>
  );
}
